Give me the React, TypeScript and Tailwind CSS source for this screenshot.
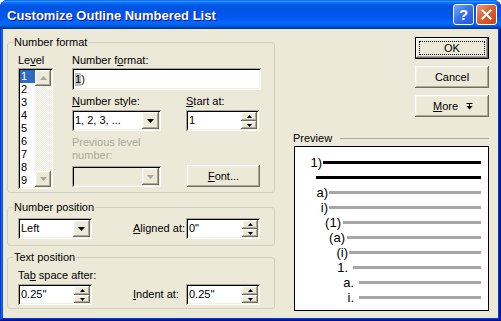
import React from "react";

// Classic 3D edges (Windows XP "Office" dialog look)
const RAISED =
  "shadow-[inset_-1px_-1px_#716f64,inset_1px_1px_#ffffff,inset_-2px_-2px_#aca899,inset_2px_2px_#f1efe2]";
const SUNKEN =
  "shadow-[inset_1px_1px_#aca899,inset_-1px_-1px_#ffffff,inset_2px_2px_#000000,inset_-2px_-2px_#f1efe2]";

// ─── Small bits ───────────────────────────────────────────────────────────────

function Tri({ up = false, size = 7, color = "#000" }: { up?: boolean; size?: number; color?: string }) {
  const h = Math.ceil(size / 2);
  const pts = up ? `0,${h} ${size},${h} ${size / 2},0` : `0,0 ${size},0 ${size / 2},${h}`;
  return (
    <svg width={size} height={h} viewBox={`0 0 ${size} ${h}`}>
      <polygon points={pts} fill={color} />
    </svg>
  );
}

function DropButton({ disabled = false }: { disabled?: boolean }) {
  return (
    <div className={`w-[17px] h-[17px] bg-[#ece9d8] ${RAISED} flex items-center justify-center`}>
      <Tri color={disabled ? "#aca899" : "#000"} />
    </div>
  );
}

function Select({ value, width, disabled = false }: { value: string; width: string; disabled?: boolean }) {
  return (
    <div className={`${width} h-[21px] p-[2px] flex ${SUNKEN} ${disabled ? "bg-[#ece9d8]" : "bg-white"}`}>
      <span className="flex-1 pl-[1px] leading-[17px] whitespace-nowrap overflow-hidden">{value}</span>
      <DropButton disabled={disabled} />
    </div>
  );
}

function Spinner({ value, width = "w-[74px]" }: { value: string; width?: string }) {
  return (
    <div className={`${width} h-[21px] p-[2px] flex bg-white ${SUNKEN}`}>
      <span className="flex-1 pl-[1px] leading-[17px]">{value}</span>
      <div className="w-[16px] flex flex-col">
        <div className={`h-[9px] bg-[#ece9d8] ${RAISED} flex items-center justify-center`}>
          <Tri up size={5} />
        </div>
        <div className={`h-[8px] bg-[#ece9d8] ${RAISED} flex items-center justify-center`}>
          <Tri size={5} />
        </div>
      </div>
    </div>
  );
}

function Button({ children, isDefault = false, width = "w-[74px]" }: { children: React.ReactNode; isDefault?: boolean; width?: string }) {
  if (isDefault) {
    return (
      <div className={`${width} h-[22px] border border-black flex`}>
        <div className={`flex-1 bg-[#ece9d8] ${RAISED} flex p-[3px]`}>
          <div className="flex-1 border border-dotted border-black flex items-center justify-center">{children}</div>
        </div>
      </div>
    );
  }
  return (
    <div className={`${width} h-[22px] bg-[#ece9d8] ${RAISED} flex items-center justify-center`}>{children}</div>
  );
}

function Group({ title, height, children }: { title: string; height: string; children: React.ReactNode }) {
  return (
    <fieldset className={`w-[268px] ${height} border border-[#d0d0bf] rounded-[3px] m-0 p-0`}>
      <legend className="ml-[5px] px-[1px] leading-[13px]">{title}</legend>
      {children}
    </fieldset>
  );
}

// ─── Preview ──────────────────────────────────────────────────────────────────

const ROWS = [
  { t: "1)", w: "w-[27px]", g: "ml-[1px]", c: "bg-black" },
  { t: "", w: "w-[21px]", g: "", c: "bg-black" },
  { t: "a)", w: "w-[33px]", g: "ml-[1px]", c: "bg-[#a6a6a6]" },
  { t: "i)", w: "w-[33px]", g: "ml-[1px]", c: "bg-[#a6a6a6]" },
  { t: "(1)", w: "w-[46px]", g: "ml-[2px]", c: "bg-[#a6a6a6]" },
  { t: "(a)", w: "w-[50px]", g: "ml-[2px]", c: "bg-[#a6a6a6]" },
  { t: "(i)", w: "w-[53px]", g: "ml-[1px]", c: "bg-[#a6a6a6]" },
  { t: "1.", w: "w-[53px]", g: "ml-[5px]", c: "bg-[#a6a6a6]" },
  { t: "a.", w: "w-[59px]", g: "ml-[5px]", c: "bg-[#a6a6a6]" },
  { t: "i.", w: "w-[59px]", g: "ml-[5px]", c: "bg-[#a6a6a6]" },
];

function Preview() {
  return (
    <div className="mt-[1px] h-[165px] border border-black bg-white pt-[8px] pr-[7px] text-[13px]">
      {ROWS.map((r, i) => (
        <div key={i} className="h-[15px] flex items-center">
          <span className={`${r.w} shrink-0 text-right leading-[15px]`}>{r.t}</span>
          <div className={`${r.g} flex-1 h-[3px] ${r.c}`} />
        </div>
      ))}
    </div>
  );
}

// ─── Dialog ───────────────────────────────────────────────────────────────────

export default function App() {
  return (
    <div className="w-[501px] h-[321px] bg-white font-['Liberation_Sans',Arial,sans-serif] text-[11px] leading-[13px] text-black">
      <div className="w-full h-full rounded-t-[8px] overflow-hidden flex flex-col bg-[#0054e3] shadow-[inset_-1px_-1px_#00138c,inset_1px_1px_#0831d9,inset_-2px_-2px_#001ea0,inset_2px_2px_#166aee,inset_-3px_-3px_#003bda,inset_3px_3px_#0855dd]">
        {/* Title bar */}
        <div className="h-[29px] shrink-0 flex items-center bg-[linear-gradient(180deg,#0058ee_0%,#3593ff_4%,#288eff_6%,#127dff_8%,#036ffc_10%,#0262ee_14%,#0057e5_20%,#0054e3_24%,#0055eb_56%,#005bf5_66%,#026afe_76%,#0062ef_86%,#0052d6_92%,#0040ab_96%,#003092_100%)]">
          <span className="pl-[7px] pt-[1px] font-bold text-[13px] text-white [text-shadow:1px_1px_#0f1089]">
            Customize Outline Numbered List
          </span>
          <div className="ml-auto pr-[4px] flex gap-[2px]">
            <div className="w-[21px] h-[21px] rounded-[3px] border border-white bg-[linear-gradient(135deg,#7eaaf7_0%,#3a74ea_45%,#1f57d8_100%)] flex items-center justify-center text-white font-bold text-[15px] leading-none">
              ?
            </div>
            <div className="w-[21px] h-[21px] rounded-[3px] border border-white bg-[linear-gradient(135deg,#f09a78_0%,#e2602f_45%,#c9411a_100%)] flex items-center justify-center">
              <svg width="11" height="11" viewBox="0 0 11 11">
                <path d="M1.5 1.5 L9.5 9.5 M9.5 1.5 L1.5 9.5" stroke="#fff" strokeWidth="2.2" strokeLinecap="square" />
              </svg>
            </div>
          </div>
        </div>

        {/* Body */}
        <div className="mx-[3px] h-[289px] bg-[#ece9d8] flex">
          {/* Left column */}
          <div className="pl-[4px] pt-[7px] flex flex-col">
            <Group title="Number format" height="h-[157px]">
              <div className="pl-[10px] pt-[5px] flex">
                {/* Level list */}
                <div className="w-[35px]">
                  <div className="h-[13px]">
                    Le<span className="underline">v</span>el
                  </div>
                  <div className={`mt-[1px] h-[121px] p-[2px] flex bg-white ${SUNKEN}`}>
                    <div className="flex-1 flex flex-col">
                      {[1, 2, 3, 4, 5, 6, 7, 8, 9].map((n) => (
                        <div key={n} className={`h-[13px] pl-[1px] ${n === 1 ? "bg-[#316ac5] text-white" : ""}`}>
                          {n}
                        </div>
                      ))}
                    </div>
                    <div className="w-[16px] flex flex-col bg-[repeating-conic-gradient(#ffffff_0%_25%,#ece9d8_0%_50%)] bg-[length:2px_2px]">
                      <div className={`h-[16px] bg-[#ece9d8] ${RAISED} flex items-center justify-center`}>
                        <Tri up color="#aca899" />
                      </div>
                      <div className="flex-1" />
                      <div className={`h-[16px] bg-[#ece9d8] ${RAISED} flex items-center justify-center`}>
                        <Tri color="#aca899" />
                      </div>
                    </div>
                  </div>
                </div>

                {/* Right side of group */}
                <div className="ml-[19px] w-[189px] flex flex-col">
                  <div className="h-[13px]">
                    Number f<span className="underline">o</span>rmat:
                  </div>
                  <div className={`mt-[1px] h-[22px] p-[2px] bg-white ${SUNKEN} flex items-center`}>
                    <span className="ml-[1px] bg-[#c0c0c0]">1</span>
                    <span>)</span>
                  </div>

                  <div className="mt-[5px] flex">
                    <div className="w-[89px]">
                      <div className="h-[13px]">
                        <span className="underline">N</span>umber style:
                      </div>
                      <div className="mt-[2px]">
                        <Select value="1, 2, 3, ..." width="w-[89px]" />
                      </div>
                    </div>
                    <div className="ml-[25px] w-[74px]">
                      <div className="h-[13px]">
                        <span className="underline">S</span>tart at:
                      </div>
                      <div className="mt-[2px]">
                        <Spinner value="1" width="w-[73px]" />
                      </div>
                    </div>
                  </div>

                  <div className="mt-[5px] w-[89px] text-[#aca899]">Previous level number:</div>

                  <div className="mt-[3px] flex">
                    <div className="mt-[1px]">
                      <Select value="" width="w-[89px]" disabled />
                    </div>
                    <div className="ml-[26px]">
                      <Button width="w-[73px]">
                        <span>
                          <span className="underline">F</span>ont...
                        </span>
                      </Button>
                    </div>
                  </div>
                </div>
              </div>
            </Group>

            <div className="mt-[8px]">
              <Group title="Number position" height="h-[45px]">
                <div className="pl-[10px] pt-[4px] flex items-center">
                  <Select value="Left" width="w-[74px]" />
                  <span className="ml-[41px] w-[53px]">
                    <span className="underline">A</span>ligned at:
                  </span>
                  <Spinner value={'0"'} />
                </div>
              </Group>
            </div>

            <div className="mt-[5px]">
              <Group title="Text position" height="h-[58px]">
                <div className="pl-[10px] pt-[5px]">
                  <div className="h-[13px]">
                    Ta<span className="underline">b</span> space after:
                  </div>
                  <div className="mt-[2px] flex items-center">
                    <Spinner value={'0.25"'} />
                    <span className="ml-[41px] w-[53px]">
                      <span className="underline">I</span>ndent at:
                    </span>
                    <Spinner value={'0.25"'} />
                  </div>
                </div>
              </Group>
            </div>
          </div>

          {/* Right column */}
          <div className="ml-[19px] w-[195px] pt-[8px] flex flex-col">
            <div className="flex flex-col items-end gap-[7px]">
              <Button isDefault>OK</Button>
              <Button>Cancel</Button>
              <Button>
                <span className="flex items-center gap-[8px] pl-[2px]">
                  <span>
                    <span className="underline">M</span>ore
                  </span>
                  <svg width="7" height="7" viewBox="0 0 7 7">
                    <rect x="0.5" y="0" width="6" height="1" fill="#000" />
                    <rect x="3" y="1" width="1" height="3" fill="#000" />
                    <polygon points="0.5,3 6.5,3 3.5,6.5" fill="#000" />
                  </svg>
                </span>
              </Button>
            </div>

            <div className="mt-[15px] h-[13px] flex items-center">
              <span className="-ml-[1px]">Preview</span>
              <div className="ml-[8px] flex-1 h-px bg-[#aca899]" />
            </div>
            <Preview />
          </div>
        </div>
      </div>
    </div>
  );
}
